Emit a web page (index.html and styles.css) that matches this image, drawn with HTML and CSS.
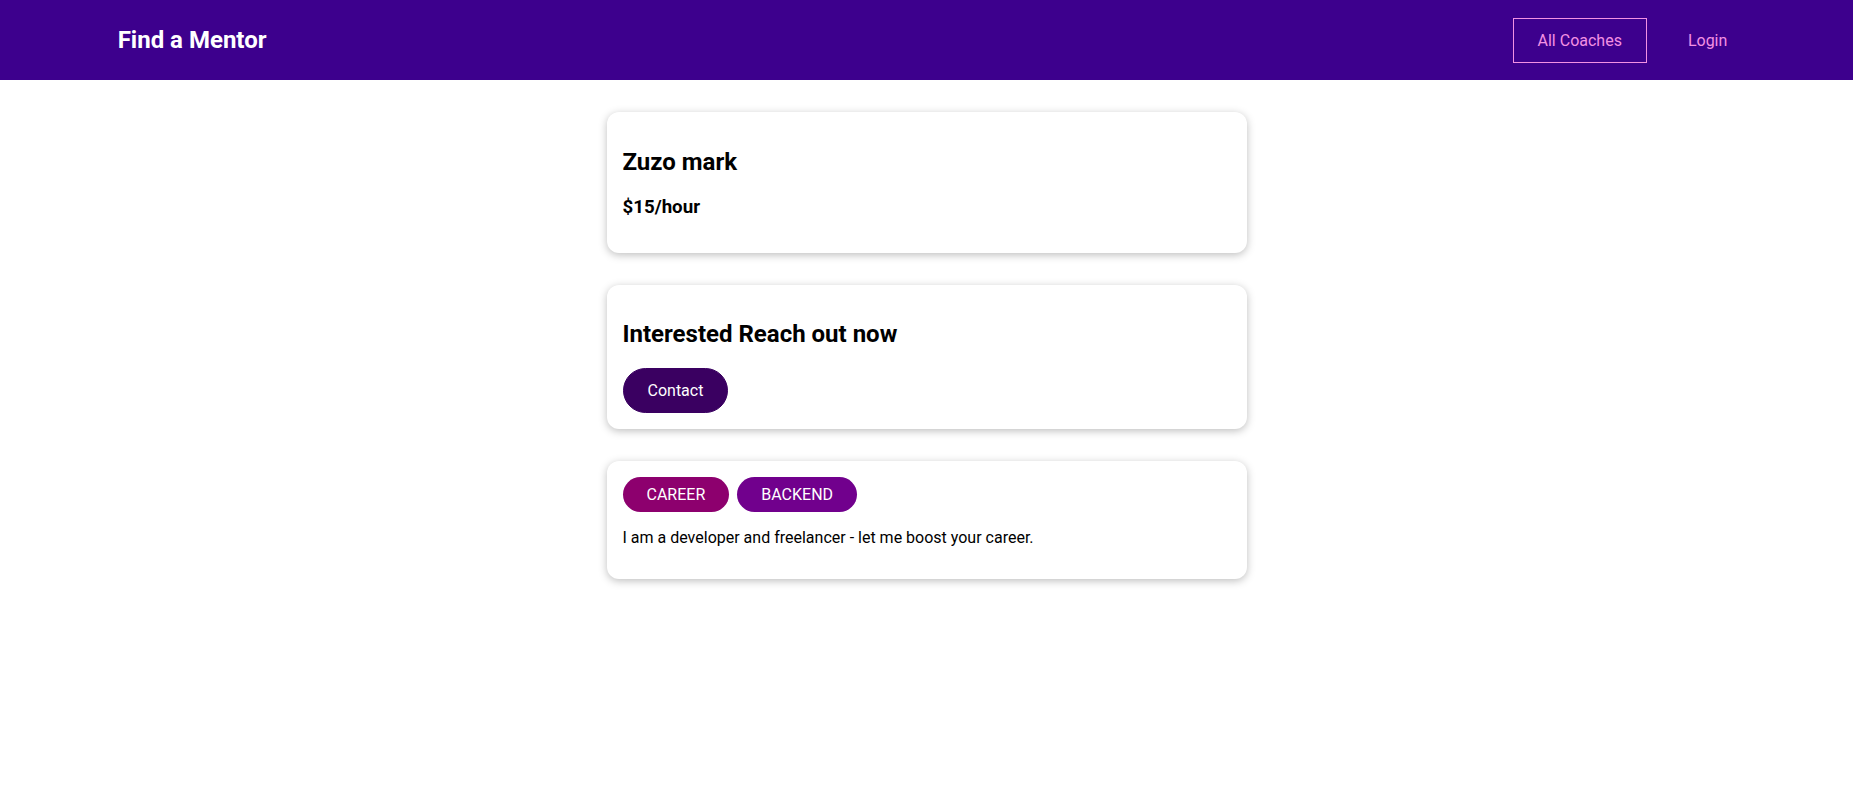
FILE: index.html
```html
<!DOCTYPE html>
<html lang="en">
<head>
<meta charset="UTF-8">
<title>Find a Mentor</title>
<link rel="stylesheet" href="styles.css">
</head>
<body>
<header class="site-header">
  <nav class="nav">
    <h1 class="brand"><a href="#" class="brand-link">Find a Mentor</a></h1>
    <ul class="nav-list">
      <li class="nav-item"><a href="#" class="nav-link active">All Coaches</a></li>
      <li class="nav-item"><a href="#" class="nav-link">Login</a></li>
    </ul>
  </nav>
</header>
<main>
  <section>
    <div class="card">
      <h2 class="card-title">Zuzo mark</h2>
      <h3 class="card-sub">$15/hour</h3>
    </div>
  </section>
  <section>
    <div class="card">
      <header>
        <h2 class="card-title">Interested Reach out now</h2>
        <a href="#" class="button">Contact</a>
      </header>
    </div>
  </section>
  <section>
    <div class="card">
      <span class="badge career">CAREER</span><span class="badge backend">BACKEND</span>
      <p class="desc">I am a developer and freelancer - let me boost your career.</p>
    </div>
  </section>
</main>
</body>
</html>
```
FILE: styles.css
```css
* {
  box-sizing: border-box;
}
html {
  font-family: Roboto, "Liberation Sans", sans-serif;
}
body {
  margin: 0;
  color: #000;
  background: #fff;
}
.site-header {
  width: 100%;
  height: 80px;
  background-color: #3d008d;
  display: flex;
  justify-content: center;
  align-items: center;
}
.nav {
  width: 90%;
  margin: auto;
  display: flex;
  justify-content: space-between;
  align-items: center;
}
.brand {
  margin: 0;
  font-size: 24px;
  font-weight: 700;
}
.brand-link {
  color: #fff;
  text-decoration: none;
  display: inline-block;
  padding: 12px 24px;
  border: 1px solid transparent;
}
.nav-list {
  list-style: none;
  margin: 0;
  padding: 0;
  display: flex;
  justify-content: center;
  align-items: center;
}
.nav-item {
  margin: 0 8px;
}
.nav-link {
  text-decoration: none;
  color: #f391e3;
  display: inline-block;
  padding: 12px 24px;
  border: 1px solid transparent;
  font-size: 16px;
}
.nav-link.active {
  border-color: #f391e3;
}
.card {
  border-radius: 12px;
  box-shadow: 0 2px 8px rgba(0, 0, 0, 0.26);
  padding: 16px;
  margin: 32px auto;
  max-width: 640px;
  background: #fff;
}
.card-title {
  font-size: 24px;
  font-weight: 700;
  margin: 19.92px 0;
}
.card-sub {
  font-size: 18.72px;
  font-weight: 700;
  margin: 18.72px 0;
}
.button {
  text-decoration: none;
  padding: 12px 24px;
  font: inherit;
  font-size: 16px;
  background-color: #3a0061;
  border: 1px solid #3a0061;
  color: #fff;
  border-radius: 30px;
  margin-right: 8px;
  display: inline-block;
}
.badge {
  color: #fff;
  padding: 8px 24px;
  border-radius: 30px;
  margin-right: 8px;
  display: inline-block;
  font-size: 16px;
}
.career {
  background-color: #8d006e;
}
.backend {
  background-color: #71008d;
}
.desc {
  margin: 16px 0;
  font-size: 16px;
}
```
